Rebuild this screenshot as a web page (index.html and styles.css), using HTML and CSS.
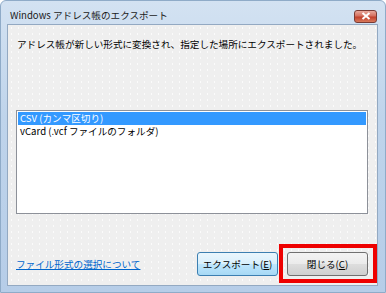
FILE: index.html
```html
<!DOCTYPE html>
<html lang="ja">
<head>
    <meta charset="UTF-8">
    <title>Windows アドレス帳のエクスポート</title>
    <link rel="stylesheet" href="styles.css">
</head>
<body>
    <div class="window">
        <div class="titlebar">
            <span class="title">Windows アドレス帳のエクスポート</span>
            <button class="close-x" aria-label="閉じる">
                <svg width="10" height="8" viewBox="0 0 10 8">
                    <path d="M1.5 1 L8.5 7 M8.5 1 L1.5 7" stroke="#fff" stroke-width="2" fill="none"/>
                </svg>
            </button>
        </div>

        <div class="content">
            <p class="message">アドレス帳が新しい形式に変換され、指定した場所にエクスポートされました。</p>

            <ul class="listbox">
                <li class="selected">CSV (カンマ区切り)</li>
                <li>vCard (.vcf ファイルのフォルダ)</li>
            </ul>

            <div class="footer">
                <a class="help-link" href="#">ファイル形式の選択について</a>
                <div class="buttons">
                    <button class="btn btn-default">エクスポート(<u>E</u>)</button>
                    <div class="highlight-wrap">
                        <button class="btn">閉じる(<u>C</u>)</button>
                        <!-- red marker around the close button -->
                        <span class="highlight"></span>
                    </div>
                </div>
            </div>
        </div>
    </div>
</body>
</html>
```

FILE: styles.css
```css
/* Reset */
html, body {
    margin: 0;
    padding: 0;
    background: #ffffff;
}

body {
    font-family: "Noto Sans CJK JP", "Liberation Sans", sans-serif;
    font-size: 9.6px;
    color: #000;
}

/* Window frame */
.window {
    width: 386px;
    height: 293px;
    box-sizing: border-box;
    border: 1px solid #8fabc8;
    border-radius: 6px 6px 0 0;
    background: linear-gradient(to bottom, #d3e2f2 0%, #bfd4eb 40%, #b6cde8 100%);
    padding: 0 7px 6px 6px;
    display: flex;
    flex-direction: column;
}

.titlebar {
    height: 23px;
    display: flex;
    align-items: center;
    justify-content: space-between;
    padding-left: 3px;
}

.title {
    font-size: 9.6px;
    color: #1a1a1a;
    margin-top: 4px;
}

.close-x {
    width: 23px;
    height: 13px;
    margin-top: 7px;
    margin-right: 1px;
    padding: 0;
    border: 1px solid #7a3b34;
    border-radius: 3px;
    background: linear-gradient(to bottom, #e9a99c 0%, #d4705f 45%, #c2402c 55%, #d87a5c 100%);
    display: flex;
    align-items: center;
    justify-content: center;
}

/* Dialog body */
.content {
    flex: 1;
    background-color: #efefef;
    background-image: radial-gradient(circle, #fbfbfb 0.7px, transparent 0.9px);
    background-size: 7px 6px;
    border: 1px solid #93a9c2;
    padding: 13px 9px 0 8px;
    display: flex;
    flex-direction: column;
}

.message {
    margin: 0;
    line-height: 13px;
    padding-left: 1px;
}

.listbox {
    list-style: none;
    margin: 59px 0 0 0;
    padding: 1px;
    height: 100px;
    background: #fff;
    border: 1px solid #8d9199;
}

.listbox li {
    height: 13px;
    line-height: 13px;
    padding-left: 2px;
}

.listbox li.selected {
    background-color: #3399ff;
    color: #fff;
}

.footer {
    margin-top: 38px;
    display: flex;
    align-items: center;
    justify-content: space-between;
}

.help-link {
    color: #0066cc;
    text-decoration: underline;
    font-size: 9.6px;
}

.buttons {
    display: flex;
    gap: 9px;
}

.btn {
    font-family: "Noto Sans CJK JP", "Liberation Sans", sans-serif;
    font-size: 9.6px;
    width: 81px;
    height: 24px;
    padding: 0;
    border: 1px solid #707070;
    border-radius: 3px;
    background: linear-gradient(to bottom, #f3f3f3 0%, #ebebeb 48%, #dddddd 52%, #cfcfcf 100%);
    color: #000;
}

.btn-default {
    border-color: #3c7fb1;
    background: linear-gradient(to bottom, #eaf6fd 0%, #d9f0fc 48%, #bee6fd 52%, #a7d9f5 100%);
}

.highlight-wrap {
    position: relative;
}

.highlight {
    position: absolute;
    left: -8px;
    top: -8px;
    right: -9px;
    bottom: -7px;
    border: 4px solid #ee0000;
    pointer-events: none;
}
```
